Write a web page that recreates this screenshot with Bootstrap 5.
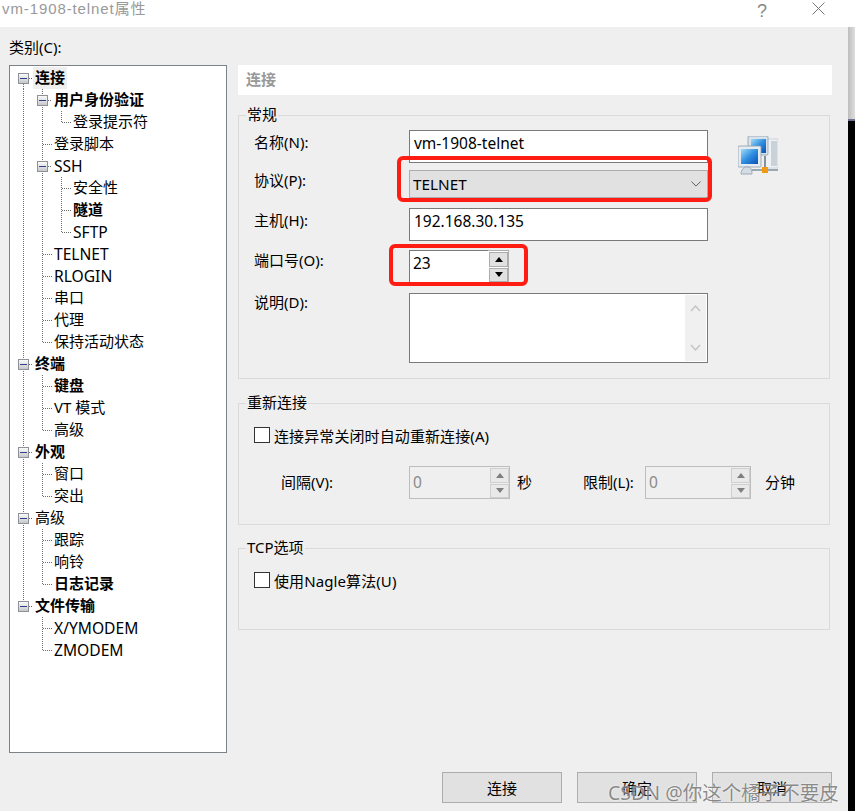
<!DOCTYPE html>
<html lang="zh-CN">
<head>
  <meta charset="UTF-8" />
  <meta name="viewport" content="width=device-width, initial-scale=1.0" />
  <title>vm-1908-telnet属性</title>
  <link href="https://cdn.jsdelivr.net/npm/bootstrap@5.3.0/dist/css/bootstrap.min.css" rel="stylesheet">
  <style>
    html, body { height: 811px; overflow: hidden; }
    body {
      background-color: #efefef;
      color: #000;
      font-family: "Noto Sans", "Noto Sans CJK SC", sans-serif;
      font-size: 15px;
      line-height: 22px;
    }
    .app { width: 855px; height: 811px; }
    .title-bar { height: 27px; background: #fff; color: #999; font-family: "Liberation Sans", "Noto Sans CJK SC", sans-serif; font-size: 15px; letter-spacing: .9px; line-height: 18px; padding-left: 2px; }
    .title-help { position: absolute; left: 757px; top: 0; color: #888; font-family: "Liberation Sans", sans-serif; font-size: 18px; }
    .title-close { position: absolute; left: 812px; top: 2px; }
    .dlg { width: 848px; height: 784px; }
    .edge { width: 7px; height: 784px; }
    .edge-top { height: 92px; background: linear-gradient(to right, #bdbdbd, #dedede); }
    .edge-line { height: 2px; background: #6b7090; }
    .edge-rest { background: #000; }

    .left-col { width: 229px; padding: 9px 0 0 9px; }
    .tree-box { width: 218px; height: 688px; margin-top: 7px; padding: 1px 0 0 4px; background: #fff; border: 1px solid #7d8287; }
    .tree-row { height: 22px; white-space: nowrap; }
    .tree-row b { font-weight: 700; }
    .tree-label { padding: 0 2px; display: inline-block; height: 22px; line-height: 20px; }
    .tree-label.on { background: #efefef; }
    .tree-label.latin { font-size: 15.6px; line-height: 22px; }
    .cell { flex: 0 0 19px; width: 19px; height: 22px; position: relative; background-repeat: no-repeat; }
    .vdots { --dots: repeating-linear-gradient(to bottom, #6e6e6e 0 1px, transparent 1px 2px); --dash: repeating-linear-gradient(to right, #6e6e6e 0 1px, transparent 1px 2px); }
    .c-v { background-image: var(--dots); background-size: 1px 22px; background-position: 9px 0; }
    .c-t { background-image: var(--dots), var(--dash); background-size: 1px 22px, 9px 1px; background-position: 9px 0, 10px 11px; }
    .c-l { background-image: var(--dots), var(--dash); background-size: 1px 12px, 9px 1px; background-position: 9px 0, 10px 11px; }
    .c-bm { background-image: var(--dots), var(--dash); background-size: 1px 22px, 4px 1px; background-position: 9px 0, 15px 11px; }
    .c-bt { background-image: var(--dots), var(--dash); background-size: 1px 11px, 4px 1px; background-position: 9px 11px, 15px 11px; }
    .c-be { background-image: var(--dots), var(--dash); background-size: 1px 11px, 4px 1px; background-position: 9px 0, 15px 11px; }
    .expander { position: absolute; left: 4px; top: 6px; width: 11px; height: 11px; border: 1px solid #8e9297; background: linear-gradient(to bottom, #fafafa, #c6c8cc); }
    .expander::after { content: ""; position: absolute; left: 1px; top: 4px; width: 7px; height: 1px; background: #34408c; }

    .right-col { width: 594px; margin-left: 9px; padding-top: 38px; }
    .head-band { height: 30px; background: #fff; color: #999; font-weight: 700; line-height: 28px; padding-left: 8px; }
    .grp { width: 592px; border: 1px solid #dadada; }
    .grp legend { float: none; width: auto; margin: 0 0 0 -8px; padding: 0 1px 1px; font-size: 15px; line-height: 21px; }
    .grp-main { height: 275px; margin-top: 9px; padding-left: 15px; }
    .grp-reconn { height: 133px; margin-top: 13px; padding-left: 15px; }
    .grp-tcp { height: 93px; margin-top: 12px; padding-left: 15px; }

    .form-col { width: 454px; }
    .lbl { width: 155px; flex: none; margin-top: -1px; }
    .lbl-low { padding-top: 2px; }
    .lbl-memo { margin-top: -2px; }
    .win-input.form-control { width: 299px; height: 33px; padding: 0 4px 7px; font-size: 15.5px; line-height: 22px; color: #000; border: 1px solid #7a7a7a; border-radius: 0; box-shadow: none; }
    .win-select.form-select { width: 299px; height: 28px; padding: 0 3px; font-size: 15.3px; line-height: 26px; color: #000; background-color: #e1e1e1; background-image: url("data:image/svg+xml,%3csvg xmlns='http://www.w3.org/2000/svg' viewBox='0 0 12 7'%3e%3cpath fill='none' stroke='%23444' d='M.5.5 6 6 11.500.5'/%3e%3c/svg%3e"); background-size: 10px 6px; background-position: right 6px center; border: 1px solid #adadad; border-radius: 0; }
    .m7 { margin-top: 7px; }
    .m4 { margin-top: 4px; }
    .m9 { margin-top: 9px; }
    .m10 { margin-top: 10px; }

    .spin { height: 33px; border: 1px solid #7a7a7a; border-right: 0; background: #fff; flex: none; }
    .spin-port { width: 100px; }
    .spin-val { flex: 1 1 auto; padding: 1px 3px 0; font-size: 15.5px; }
    .spin-col { width: 21px; flex: none; border-top: 1px solid #adadad; border-right: 1px solid #adadad; margin-top: -1px; }
    .spin-btn { flex: 1 1 0; margin: 1px 0 0 1px; background: #e1e1e1; border: 1px solid #adadad; }
    .tri-up { width: 0; height: 0; border: 4px solid transparent; border-top: 0; border-bottom: 5px solid #000; }
    .tri-down { width: 0; height: 0; border: 4px solid transparent; border-bottom: 0; border-top: 5px solid #000; }
    .spin-off { border-color: #bdbdbd; background: #efefef; color: #8a8a8a; }
    .spin-off .spin-val { padding-top: 4px; }
    .spin-off .spin-col { border-color: #bdbdbd; }
    .spin-off .spin-btn { background: #e9e9e9; border-color: #cfcfcf; }
    .spin-off .tri-up { border-bottom-color: #7e7e7e; }
    .spin-off .tri-down { border-top-color: #7e7e7e; }
    .spin-a { width: 101px; }
    .spin-b { width: 106px; }
    .memo-wrap { width: 299px; height: 70px; border: 1px solid #7a7a7a; background: #fff; }
    .memo-text.form-control { border: 0; border-radius: 0; padding: 0 4px; resize: none; box-shadow: none; }
    .memo-bar { width: 21px; flex: none; margin: 1px 1px 1px 0; background: #f0f0f0; padding: 4px 0; }
    .win-check { height: 22px; }
    .win-check .form-check-input { width: 16px; height: 16px; margin: 0; border: 1px solid #333; border-radius: 0; flex: none; }
    .check-text { padding-top: 2px; letter-spacing: .1px; }
    .reconn-row { margin-top: 22px; padding-left: 27px; height: 33px; }
    .reconn-text { padding-top: 5px; }
    .lbl-gap { width: 128px; flex: none; }
    .unit-a { width: 73px; padding-left: 7px; flex: none; }
    .lbl-limit { width: 62px; flex: none; }
    .unit-b { padding-left: 14px; }
    .net-icon { margin: 10px 0 0 30px; flex: none; }

    .foot-row { margin-top: 19px; padding-right: 16px; gap: 15px; }
    .win-btn.btn { width: 120px; height: 31px; padding: 0; font-size: 15px; line-height: 22px; color: #000; background: #e1e1e1; border: 1px solid #adadad; border-radius: 0; }

    .red-mark { position: absolute; border: 4px solid #ff1c12; border-radius: 6px; }
    .red-a { left: 397px; top: 156px; width: 315px; height: 46px; }
    .red-b { left: 389px; top: 244px; width: 139px; height: 42px; }
    .wm { position: absolute; left: 608px; top: 779px; font-size: 19.5px; line-height: 28px; color: rgba(96, 96, 96, .72); text-shadow: 0 0 2px #fff; white-space: nowrap; }
  </style>
</head>
<body>
  <div class="app position-relative">
    <div class="title-bar">vm-1908-telnet属性</div>
    <span class="title-help">?</span>
    <svg class="title-close" width="13" height="13" viewBox="0 0 13 13"><path d="M.5.5l12 12M12.5.5l-12 12" stroke="#777" fill="none"/></svg>

    <div class="d-flex">
      <div class="dlg">
        <div class="d-flex">
          <div class="left-col">
            <div>类别(C):</div>
            <div class="tree-box vdots" id="tree"></div>
          </div>

          <div class="right-col">
            <div class="head-band">连接</div>

            <fieldset class="grp grp-main">
              <legend>常规</legend>
              <div class="d-flex">
                <div class="form-col">
                  <div class="d-flex align-items-start m4">
                    <label class="lbl lbl-low">名称(N):</label>
                    <input class="form-control win-input" value="vm-1908-telnet">
                  </div>
                  <div class="d-flex align-items-start m7">
                    <label class="lbl">协议(P):</label>
                    <select class="form-select win-select"><option>TELNET</option></select>
                  </div>
                  <div class="d-flex align-items-start m10">
                    <label class="lbl lbl-low">主机(H):</label>
                    <input class="form-control win-input" value="192.168.30.135">
                  </div>
                  <div class="d-flex align-items-start m9">
                    <label class="lbl">端口号(O):</label>
                    <div class="spin spin-port d-flex">
                      <div class="spin-val">23</div>
                      <div class="spin-col d-flex flex-column">
                        <div class="spin-btn d-flex align-items-center justify-content-center"><i class="tri-up"></i></div>
                        <div class="spin-btn d-flex align-items-center justify-content-center"><i class="tri-down"></i></div>
                      </div>
                    </div>
                  </div>
                  <div class="d-flex align-items-start m10">
                    <label class="lbl lbl-memo">说明(D):</label>
                    <div class="memo-wrap d-flex">
                      <textarea class="form-control memo-text"></textarea>
                      <div class="memo-bar d-flex flex-column justify-content-between align-items-center">
                        <svg width="11" height="16" viewBox="0 0 11 16"><path d="M1 12l4.500-5L10 12" stroke="#c4c4c4" stroke-width="1.500" fill="none"/></svg>
                        <svg width="11" height="16" viewBox="0 0 11 16"><path d="M1 4l4.500 5L10 4" stroke="#c4c4c4" stroke-width="1.500" fill="none"/></svg>
                      </div>
                    </div>
                  </div>
                </div>
                <svg class="net-icon" width="40" height="40" viewBox="0 0 40 40">
                  <defs>
                    <linearGradient id="scr" x1="0" y1="0" x2="1" y2="1"><stop offset="0" stop-color="#a5dcf7"/><stop offset=".5" stop-color="#2f8fe0"/><stop offset="1" stop-color="#0a4fb8"/></linearGradient>
                  </defs>
                  <rect x="27" y="3" width="13" height="29" fill="#eef2f5" stroke="#b6c0c9" stroke-width=".6"/>
                  <rect x="33" y="5" width="6" height="25" fill="#c9d1d9"/>
                  <rect x="10" y="0" width="20" height="19" rx="1" fill="#d8e2ea" stroke="#8fa0ae" stroke-width=".8"/>
                  <rect x="13" y="3" width="15" height="14" fill="url(#scr)"/>
                  <rect x="0" y="10" width="23" height="21" rx="1" fill="#e4ebf1" stroke="#8c9cab" stroke-width=".8"/>
                  <rect x="3" y="13" width="17" height="15" fill="url(#scr)"/>
                  <path d="M3 38c0-4 3-7 5-7h2c3 0 4 3 4 7z" fill="#d5dde4" stroke="#8c9cab" stroke-width=".8"/>
                  <path d="M27 20v12" stroke="#5f6f7c" stroke-width="1.400"/>
                  <path d="M14 34h26" stroke="#9aa6b1" stroke-width="2"/>
                  <rect x="24" y="31" width="6" height="6" fill="#f09a14"/>
                </svg>
              </div>
            </fieldset>

            <fieldset class="grp grp-reconn">
              <legend>重新连接</legend>
              <div class="win-check d-flex align-items-center gap-1 mt-2 pt-1">
                <input class="form-check-input" type="checkbox">
                <span class="check-text">连接异常关闭时自动重新连接(A)</span>
              </div>
              <div class="reconn-row d-flex">
                <span class="lbl-gap reconn-text">间隔(V):</span>
                <div class="spin spin-off spin-a d-flex">
                  <div class="spin-val">0</div>
                  <div class="spin-col d-flex flex-column">
                    <div class="spin-btn d-flex align-items-center justify-content-center"><i class="tri-up"></i></div>
                    <div class="spin-btn d-flex align-items-center justify-content-center"><i class="tri-down"></i></div>
                  </div>
                </div>
                <span class="unit-a reconn-text">秒</span>
                <span class="lbl-limit reconn-text">限制(L):</span>
                <div class="spin spin-off spin-b d-flex">
                  <div class="spin-val">0</div>
                  <div class="spin-col d-flex flex-column">
                    <div class="spin-btn d-flex align-items-center justify-content-center"><i class="tri-up"></i></div>
                    <div class="spin-btn d-flex align-items-center justify-content-center"><i class="tri-down"></i></div>
                  </div>
                </div>
                <span class="unit-b reconn-text">分钟</span>
              </div>
            </fieldset>

            <fieldset class="grp grp-tcp">
              <legend>TCP选项</legend>
              <div class="win-check d-flex align-items-center gap-1 mt-2 pt-1">
                <input class="form-check-input" type="checkbox">
                <span class="check-text">使用Nagle算法(U)</span>
              </div>
            </fieldset>
          </div>
        </div>

        <div class="foot-row d-flex justify-content-end">
          <button class="btn win-btn">连接</button>
          <button class="btn win-btn">确定</button>
          <button class="btn win-btn">取消</button>
        </div>
      </div>

      <div class="edge d-flex flex-column">
        <div class="edge-top"></div>
        <div class="edge-line"></div>
        <div class="edge-rest flex-grow-1"></div>
      </div>
    </div>

    <div class="red-mark red-a"></div>
    <div class="red-mark red-b"></div>
    <div class="wm">CSDN @你这个橘子不要皮</div>
  </div>

  <script src="https://cdn.jsdelivr.net/npm/bootstrap@5.3.0/dist/js/bootstrap.bundle.min.js"></script>
  <script>
    // [guide cells, text, bold]  | = line, T = tee, L = elbow, _ = blank, a/m/e = expander top/middle/end
    const rows = [
      ['a', '连接', 1], ['|m', '用户身份验证', 1], ['||L', '登录提示符'], ['|T', '登录脚本'],
      ['|m', 'SSH'], ['||T', '安全性'], ['||T', '隧道', 1], ['||L', 'SFTP'],
      ['|T', 'TELNET'], ['|T', 'RLOGIN'], ['|T', '串口'], ['|T', '代理'], ['|L', '保持活动状态'],
      ['m', '终端', 1], ['|T', '键盘', 1], ['|T', 'VT 模式'], ['|L', '高级'],
      ['m', '外观', 1], ['|T', '窗口'], ['|L', '突出'],
      ['m', '高级'], ['|T', '跟踪'], ['|T', '响铃'], ['|L', '日志记录', 1],
      ['e', '文件传输', 1], ['_T', 'X/YMODEM'], ['_L', 'ZMODEM']
    ];
    const cellClass = { '|': 'c-v', T: 'c-t', L: 'c-l', _: '', a: 'c-bt', m: 'c-bm', e: 'c-be' };
    const tree = document.getElementById('tree');
    tree.innerHTML = rows.map(([guide, text, bold], i) => {
      const cells = [...guide].map(g => {
        const box = 'ame'.includes(g) ? '<i class="expander"></i>' : '';
        return `<span class="cell ${cellClass[g]}">${box}</span>`;
      }).join('');
      const label = bold ? `<b>${text}</b>` : text;
      const cls = (i === 0 ? ' on' : '') + (/^[\x00-\x7f]+$/.test(text) ? ' latin' : '');
      return `<div class="tree-row d-flex">${cells}<span class="tree-label${cls}">${label}</span></div>`;
    }).join('');
  </script>
</body>
</html>
